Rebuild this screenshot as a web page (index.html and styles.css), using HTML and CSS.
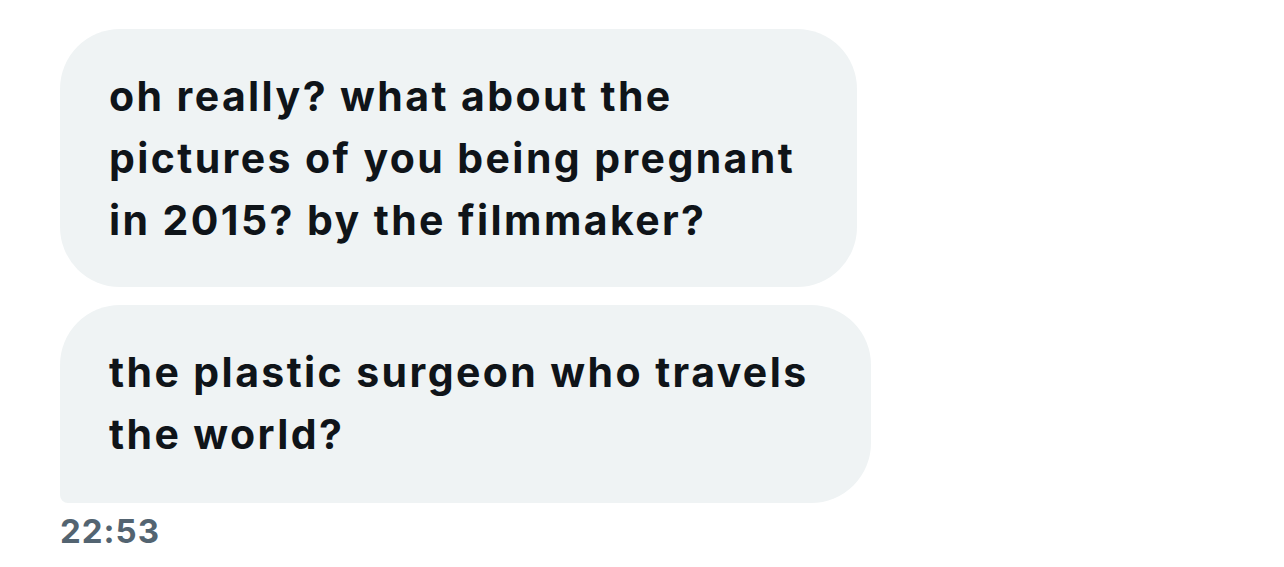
FILE: index.html
```html
<!DOCTYPE html>
<html>
<head>
<meta charset="utf-8">
<link rel="stylesheet" href="styles.css">
</head>
<body>
<div class="thread">
  <div class="bubble">oh really? what about the<br>pictures of you being pregnant<br>in 2015? by the filmmaker?</div>
  <div class="bubble last">the plastic surgeon who travels<br>the world?</div>
  <div class="time">22:53</div>
</div>
</body>
</html>
```
FILE: styles.css
```css
html, body {
  margin: 0;
  padding: 0;
  background: #ffffff;
}
body {
  font-family: Inter, "Liberation Sans", sans-serif;
  color: #0f1419;
}
.thread {
  display: flex;
  flex-direction: column;
  align-items: flex-start;
  gap: 18px;
  padding: 29px 0 0 60px;
}
.bubble {
  background: #eff3f4;
  border-radius: 60px;
  padding: 36px 62px 36px 49px;
  font-size: 41px;
  font-weight: 700;
  letter-spacing: 2.4px;
  line-height: 62px;
}
.bubble.last {
  padding-bottom: 38px;
  border-bottom-left-radius: 8px;
}
.time {
  margin-top: -10px;
  font-size: 33px;
  font-weight: 700;
  letter-spacing: 1px;
  color: #536471;
}
```
